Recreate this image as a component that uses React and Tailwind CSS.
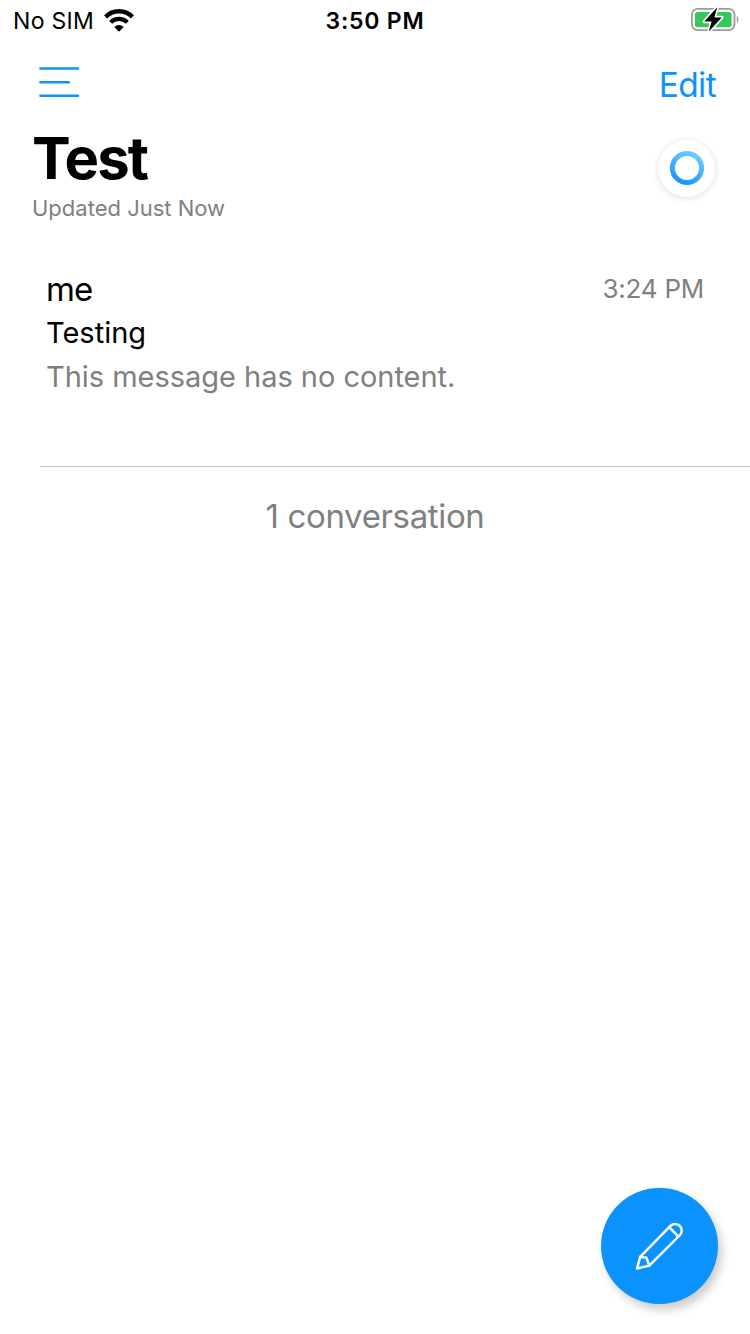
function WifiIcon() {
  return (
    <svg className="ml-[8.5px] h-[24px] w-[32px]" viewBox="0 0 32 24" fill="none" stroke="#000">
      <path d="M2.6 7.9 A18.8 18.8 0 0 1 29.4 7.9" strokeWidth="4.4" />
      <path d="M7.7 13.4 A11.6 11.6 0 0 1 24.3 13.4" strokeWidth="4.2" />
      <path d="M16 22.7 L11.3 18 A6.6 6.6 0 0 1 20.7 18 Z" fill="#000" stroke="none" />
    </svg>
  );
}

function BatteryIcon() {
  return (
    <svg className="-mt-[5px] h-[28px] w-[49px]" viewBox="0 0 49 28">
      <rect x="1.9" y="4.9" width="42.6" height="21.2" rx="5.6" fill="#fff" stroke="#9c9c9e" strokeWidth="1.8" />
      <rect x="4.9" y="7.9" width="36.6" height="15.4" rx="2.8" fill="#34c759" />
      <path d="M46.8 11.8 C48.9 12.8 48.9 18.2 46.8 19.2 Z" fill="#9c9c9e" />
      <path d="M27.2 3.2 L14.2 17.6 H21.6 L18.8 27.6 L31.8 13.4 H24.4 Z" fill="#000" stroke="#fff" strokeWidth="3.4" strokeLinejoin="round" paintOrder="stroke" />
    </svg>
  );
}

function StatusBar() {
  return (
    <div className="grid h-[41px] grid-cols-3 items-center pl-[13px] pr-[11px] text-[23px]">
      <div className="flex items-center">
        <span className="leading-[28px] tracking-[0.3px]">No SIM</span>
        <WifiIcon />
      </div>
      <span className="pr-[2px] text-center font-semibold leading-[28px] tracking-[0.8px]">3:50 PM</span>
      <div className="flex justify-end">
        <BatteryIcon />
      </div>
    </div>
  );
}

function Spinner() {
  return (
    <div className="mt-[12px] flex h-[57px] w-[57px] items-center justify-center rounded-full bg-white pb-[2px] shadow-[0_1px_7px_rgba(0,0,0,0.13)]">
      <svg className="h-[36px] w-[36px]" viewBox="0 0 36 36">
        <defs>
          <linearGradient id="ring" x1="0.8" y1="0" x2="0.3" y2="1">
            <stop offset="0" stopColor="#6dceff" />
            <stop offset="1" stopColor="#1b95fb" />
          </linearGradient>
        </defs>
        <circle cx="18" cy="18" r="14.6" fill="none" stroke="url(#ring)" strokeWidth="5" />
      </svg>
    </div>
  );
}

export default function App() {
  return (
    <div className="flex h-[1334px] w-[750px] flex-col overflow-hidden bg-white font-['Inter',sans-serif] text-black">
      <StatusBar />

      <nav className="flex h-[87px] items-center justify-between pl-[39px] pr-[34px]">
        <svg className="-mt-[5px] h-[32px] w-[41px]" viewBox="0 0 41 32" fill="none" stroke="#0a95fb" strokeWidth="2.6" strokeLinecap="round">
          <path d="M1.5 2.5 H39 M1.5 16.3 H29.7 M1.5 29.8 H39" />
        </svg>
        <button className="text-[33.5px] leading-[40px] tracking-[-0.6px] text-[#0a95fb]">Edit</button>
      </nav>

      <header className="flex h-[112px] justify-between pl-[32px] pr-[35px]">
        <div>
          <h1 className="text-[58px] font-bold leading-[61px] tracking-[-1.8px]">Test</h1>
          <p className="mt-[6px] text-[22px] leading-[26px] text-[#808080]">Updated Just Now</p>
        </div>
        <Spinner />
      </header>

      <main className="flex flex-col">
        <article className="ml-[40px] flex h-[227px] flex-col border-b border-[#c6c6c8] pl-[6px] pr-[46px] pt-[27px]">
          <div className="flex justify-between leading-[44px]">
            <span className="text-[33px] tracking-[-0.9px]">me</span>
            <time className="text-[26px] leading-[44px] tracking-[-0.25px] text-[#808080]">3:24 PM</time>
          </div>
          <p className="text-[29px] leading-[44px]">Testing</p>
          <p className="text-[29px] leading-[44px] tracking-[-0.03px] text-[#808080]">This message has no content.</p>
        </article>
        <p className="mt-[29px] text-center text-[33px] leading-[40px] tracking-[-0.35px] text-[#808080]">1 conversation</p>
      </main>

      <button aria-label="Compose" className="mb-[30px] mr-[32.5px] mt-auto flex h-[116.5px] w-[116.5px] items-center justify-center self-end rounded-full bg-[#0a93ff] pr-[1px] shadow-[4px_6px_10px_rgba(0,0,0,0.2)]">
        <svg className="h-[56px] w-[56px]" viewBox="0 0 56 56" fill="none" stroke="#fff" strokeWidth="2.5" strokeLinejoin="round" strokeLinecap="round">
          <path d="M6 50.5 L9.2 38.8 L39.7 7.7 C42.2 5.2 46.4 5.4 48.8 7.9 C51.3 10.4 51.4 14.5 49 17 L18.3 47.6 Z" />
          <path d="M38.3 9.2 L47.3 18.7 M9.2 38.8 L15.5 39.8 L18.3 47.6" />
        </svg>
      </button>
    </div>
  );
}
